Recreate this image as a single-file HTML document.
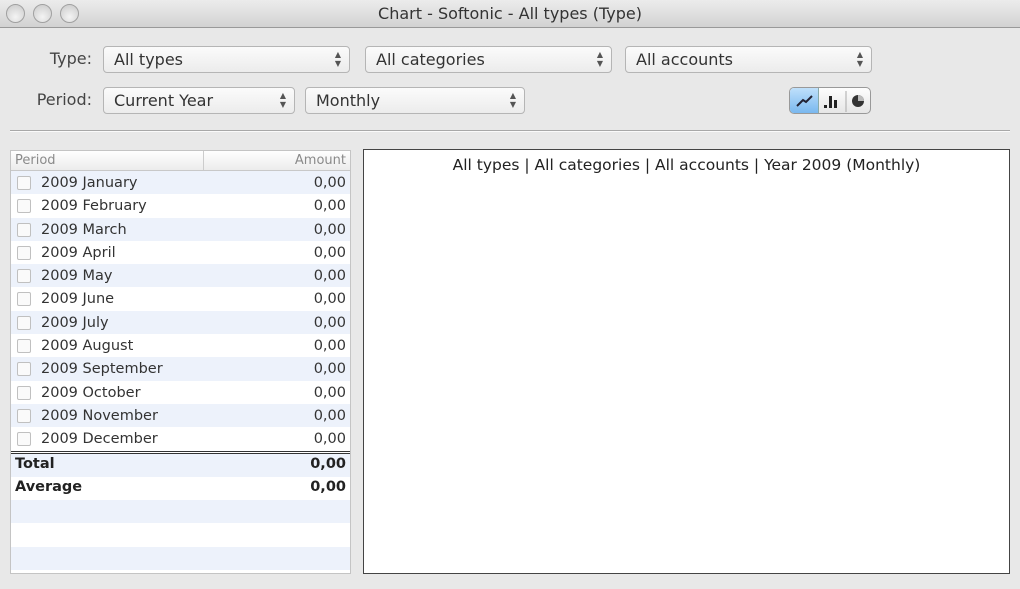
<!DOCTYPE html>
<html><head><style>
*{margin:0;padding:0;box-sizing:border-box}
body{width:1020px;height:589px;overflow:hidden;background:#e8e8e8;font-family:"Lucida Grande","DejaVu Sans","Liberation Sans",sans-serif;color:#222;position:relative}
.tb{position:absolute;left:0;top:0;width:1020px;height:28px;background:linear-gradient(#ececec,#d2d2d2);border-bottom:1px solid #999;}
.tb .t{position:absolute;left:0;right:0;top:4px;text-align:center;font-size:16px;color:#333}
.light{position:absolute;top:4px;width:19px;height:19px;border-radius:50%;background:radial-gradient(circle at 50% 70%,#f4f4f4,#c8c8c8);border:1px solid #a0a0a0}
.lbl{position:absolute;font-size:16px;color:#444;text-align:right}
.dd{position:absolute;height:27px;border:1px solid #b5b5b5;border-radius:4px;background:linear-gradient(#fbfbfb,#ececec);font-size:16px;padding:3px 10px;color:#333}
.ar{position:absolute;right:8px;top:3px;font-size:8px;line-height:9px;color:#555}
.sep{position:absolute;left:10px;top:130px;width:1000px;height:2px;border-top:1px solid #a8a8a8;border-bottom:1px solid #fafafa}
.tbl{position:absolute;left:10px;top:150px;width:341px;height:424px;border:1px solid #c4c4c4;background:#fff}
.hd{height:20px;border-bottom:1px solid #c8c8c8;background:linear-gradient(#fff,#ececec);font-size:13px;color:#8a8a8a;position:relative}
.hd span{position:absolute;top:2px}
.r{height:23.3px;position:relative;font-size:14.5px;color:#333}
.rows .r:nth-child(odd){background:#edf2fb}
.r .cb{position:absolute;left:6px;top:5px;width:14px;height:14px;border:1px solid #c0c0c0;border-radius:2px;background:#fafafa}
.r .n{position:absolute;left:30px;top:4px}
.r .v{position:absolute;right:4px;top:4px}
.b .n,.b .v{top:2px}
.b{font-weight:bold;color:#222}
.chart{position:absolute;left:363px;top:149px;width:647px;height:425px;border:1px solid #444;background:#fff}
.chart div{text-align:center;font-size:15.5px;margin-top:6px;color:#222}
</style></head><body>
<div class="tb"><div class="light" style="left:6px"></div><div class="light" style="left:33px"></div><div class="light" style="left:60px"></div><div class="t">Chart - Softonic - All types (Type)</div></div>
<div class="lbl" style="left:20px;top:49px;width:72px">Type:</div>
<div class="lbl" style="left:20px;top:90px;width:72px">Period:</div>
<div class="dd" style="left:103px;top:46px;width:247px">All types<span class="ar">▲<br>▼</span></div>
<div class="dd" style="left:365px;top:46px;width:247px">All categories<span class="ar">▲<br>▼</span></div>
<div class="dd" style="left:625px;top:46px;width:247px">All accounts<span class="ar">▲<br>▼</span></div>
<div class="dd" style="left:103px;top:87px;width:192px">Current Year<span class="ar">▲<br>▼</span></div>
<div class="dd" style="left:305px;top:87px;width:220px">Monthly<span class="ar">▲<br>▼</span></div>
<div style="position:absolute;left:789px;top:87px;width:82px;height:27px;border:1px solid #999;border-radius:5px;background:linear-gradient(#fdfdfd,#e6e6e6);overflow:hidden">
<div style="position:absolute;left:0;top:0;width:29px;height:27px;background:linear-gradient(#bfe0fb,#74b5ee);border-right:1px solid #8aa"></div>
<svg width="82" height="27" style="position:absolute;left:0;top:0"><path d="M7 18 L13 12 L16 14 L22 8" stroke="#223" stroke-width="2" fill="none"/><rect x="34" y="17" width="3" height="3" fill="#222"/><rect x="39" y="8" width="3" height="12" fill="#222"/><rect x="44" y="12" width="3" height="8" fill="#222"/><line x1="56" y1="3" x2="56" y2="24" stroke="#aaa"/><circle cx="68" cy="13" r="6" fill="#333"/><path d="M68 13 L68 7 A6 6 0 0 1 74 13Z" fill="#bbb"/></svg></div>
<div class="sep"></div>
<div class="tbl"><div class="hd"><span style="left:4px">Period</span><span style="left:192px;top:0;height:19px;border-left:1px solid #ccc"></span><span style="right:4px">Amount</span></div>
<div class="rows">
<div class="r"><span class="cb"></span><span class="n">2009 January</span><span class="v">0,00</span></div>
<div class="r"><span class="cb"></span><span class="n">2009 February</span><span class="v">0,00</span></div>
<div class="r"><span class="cb"></span><span class="n">2009 March</span><span class="v">0,00</span></div>
<div class="r"><span class="cb"></span><span class="n">2009 April</span><span class="v">0,00</span></div>
<div class="r"><span class="cb"></span><span class="n">2009 May</span><span class="v">0,00</span></div>
<div class="r"><span class="cb"></span><span class="n">2009 June</span><span class="v">0,00</span></div>
<div class="r"><span class="cb"></span><span class="n">2009 July</span><span class="v">0,00</span></div>
<div class="r"><span class="cb"></span><span class="n">2009 August</span><span class="v">0,00</span></div>
<div class="r"><span class="cb"></span><span class="n">2009 September</span><span class="v">0,00</span></div>
<div class="r"><span class="cb"></span><span class="n">2009 October</span><span class="v">0,00</span></div>
<div class="r"><span class="cb"></span><span class="n">2009 November</span><span class="v">0,00</span></div>
<div class="r"><span class="cb"></span><span class="n">2009 December</span><span class="v">0,00</span></div>
</div>
<div style="border-top:3px double #333"></div>
<div>
<div class="r b" style="background:#edf2fb"><span class="n" style="left:4px">Total</span><span class="v">0,00</span></div>
<div class="r b" style="background:#fff"><span class="n" style="left:4px">Average</span><span class="v">0,00</span></div>
<div class="r" style="background:#edf2fb"></div>
<div class="r" style="background:#fff"></div>
<div class="r" style="background:#edf2fb"></div>
</div></div>
<div class="chart"><div>All types | All categories | All accounts | Year 2009 (Monthly)</div></div>
</body></html>
